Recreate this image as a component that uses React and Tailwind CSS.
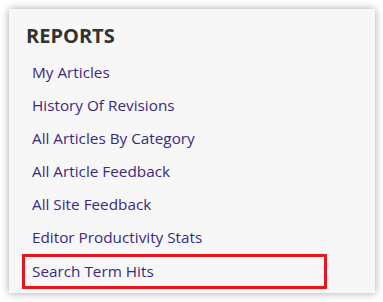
const items = [
  "My Articles",
  "History Of Revisions",
  "All Articles By Category",
  "All Article Feedback",
  "All Site Feedback",
  "Editor Productivity Stats",
  "Search Term Hits",
];

export default function App() {
  return (
    <div className="w-[383px] h-[302px] bg-white p-[9px] font-['Open_Sans',sans-serif]">
      <div className="w-[366px] h-[284px] bg-[#f7f7f7] shadow-[0_0_8px_rgba(0,0,0,0.35)] pt-[13px]">
        <h2 className="pl-[17px] text-[20px] leading-[28px] font-bold text-[#333]">REPORTS</h2>
        <ul className="mt-[6px] ml-[13px]">
          {items.map((item, i) =>
            i === items.length - 1 ? (
              <li
                key={item}
                className="w-[305px] h-[35px] px-[7px] flex items-center text-[15.3px] text-[#3b2a80] border-[3px] border-[#e8141e]"
              >
                {item}
              </li>
            ) : (
              <li key={item} className="w-[305px] h-[33px] px-[10px] flex items-center text-[15.3px] text-[#3b2a80]">
                {item}
              </li>
            )
          )}
        </ul>
      </div>
    </div>
  );
}
